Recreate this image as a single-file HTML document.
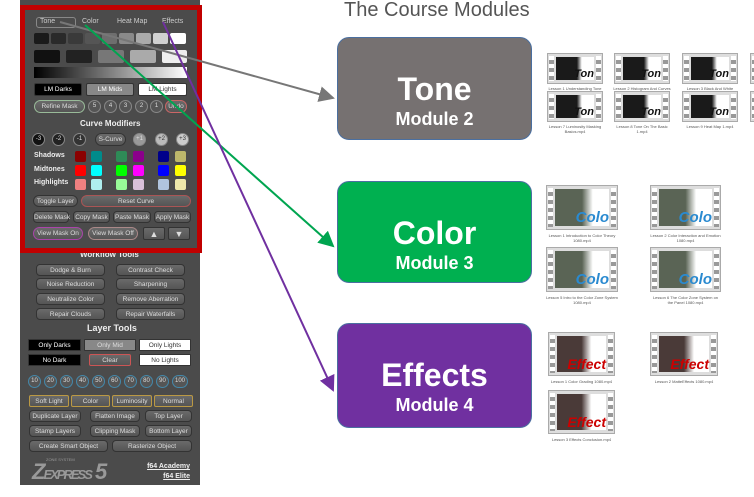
<!DOCTYPE html>
<html><head><meta charset="utf-8"><style>
*{margin:0;padding:0;box-sizing:border-box}
body{width:754px;height:497px;background:#fff;position:relative;overflow:hidden;font-family:"Liberation Sans",sans-serif}
.a{position:absolute}
#panel{left:20px;top:0;width:180px;height:485px;background:#4b4b4b}
#red{left:20px;top:5px;width:182px;height:248px;border:5px solid #c00000}
.b{position:absolute;height:12px;border-radius:4px;background:linear-gradient(#6a6a6a,#555);color:#ddd;font-size:6.5px;text-align:center;line-height:12px;border:1px solid #333;white-space:nowrap}
.c{position:absolute;width:13px;height:13px;border-radius:50%;background:#555;border:1px solid #888;color:#ddd;font-size:6px;text-align:center;line-height:11px}
.s{position:absolute;width:11px;height:11px;border-radius:2px}
.lbl{position:absolute;color:#eee;font-size:7px;font-weight:bold}
.box{position:absolute;left:337px;width:195px;border-radius:12px;border:1px solid #4a6fa0;color:#fff;text-align:center;font-weight:bold}
.box .t{font-size:32px;line-height:38px;margin-top:32px}
.box .m{font-size:18px;line-height:22px}
.th{position:absolute;background:#ddd;border:1px solid #aaa;overflow:hidden}
.th i{position:absolute;top:3px;bottom:3px;left:8px;right:8px}
.th b{position:absolute;right:8px;bottom:3px;font-style:italic;font-weight:bold}
.th:before,.th:after{content:"";position:absolute;top:2px;bottom:2px;width:5px;background:repeating-linear-gradient(#fff 0 4px,#999 4px 8px);z-index:2}
.th:before{left:1px}.th:after{right:1px}
.tn i{background:linear-gradient(90deg,#1a1a1a 55%,#fff 68%)}
.tn b{font-size:11px;color:#111}
.cl i{background:linear-gradient(90deg,#5a6455 50%,#fff 70%)}
.cl b{font-size:15px;color:#2a8ad0}
.ef i{background:linear-gradient(90deg,#4a3a38 50%,#fff 70%)}
.ef b{font-size:14px;color:#c00}
.cap{position:absolute;font-size:4px;color:#555;text-align:center;line-height:5px}
</style></head><body>
<div class="a" id="panel"></div>
<div class="a" id="red"></div>
<div class="a" style="left:36px;top:17px;width:40px;height:11px;border:1px solid #888;border-radius:3px"></div>
<div class="lbl" style="left:40px;top:18px;font-weight:normal;color:#ccc">Tone</div>
<div class="lbl" style="left:82px;top:18px;font-weight:normal;color:#ccc">Color</div>
<div class="lbl" style="left:117px;top:18px;font-weight:normal;color:#ccc">Heat Map</div>
<div class="lbl" style="left:162px;top:18px;font-weight:normal;color:#ccc">Effects</div>
<div class="s" style="left:34px;top:33px;width:15px;background:#1a1a1a"></div>
<div class="s" style="left:51px;top:33px;width:15px;background:#2a2a2a"></div>
<div class="s" style="left:68px;top:33px;width:15px;background:#3a3a3a"></div>
<div class="s" style="left:85px;top:33px;width:15px;background:#555"></div>
<div class="s" style="left:102px;top:33px;width:15px;background:#6e6e6e"></div>
<div class="s" style="left:119px;top:33px;width:15px;background:#8a8a8a"></div>
<div class="s" style="left:136px;top:33px;width:15px;background:#aaa"></div>
<div class="s" style="left:153px;top:33px;width:15px;background:#d0d0d0"></div>
<div class="s" style="left:170px;top:33px;width:16px;background:#fff"></div>
<div class="s" style="left:34px;top:50px;width:26px;height:13px;background:#111"></div>
<div class="s" style="left:66px;top:50px;width:26px;height:13px;background:#222"></div>
<div class="s" style="left:98px;top:50px;width:26px;height:13px;background:#777"></div>
<div class="s" style="left:130px;top:50px;width:26px;height:13px;background:#aaa"></div>
<div class="s" style="left:162px;top:50px;width:25px;height:13px;background:#eee"></div>
<div class="a" style="left:34px;top:67px;width:153px;height:11px;background:linear-gradient(90deg,#000,#fff)"></div>
<div class="b" style="left:34px;top:83px;width:48px;height:13px;background:#000;color:#fff;border-radius:2px">LM Darks</div>
<div class="b" style="left:86px;top:83px;width:48px;height:13px;background:#888;color:#fff;border-radius:2px">LM Mids</div>
<div class="b" style="left:138px;top:83px;width:49px;height:13px;background:#fff;color:#333;border-radius:2px">LM Lights</div>
<div class="b" style="left:34px;top:100px;width:51px;height:13px;border-radius:7px;border-color:#9b9">Refine Mask</div>
<div class="c" style="left:88px;top:100px">5</div><div class="c" style="left:104px;top:100px">4</div><div class="c" style="left:119px;top:100px">3</div><div class="c" style="left:135px;top:100px">2</div><div class="c" style="left:150px;top:100px">1</div>
<div class="b" style="left:165px;top:100px;width:22px;height:13px;border-radius:7px;border-color:#c66">Undo</div>
<div class="lbl" style="left:80px;top:119px;font-size:8px">Curve Modifiers</div>
<div class="c" style="left:32px;top:133px;background:#111">-3</div>
<div class="c" style="left:52px;top:133px;background:#222">-2</div>
<div class="c" style="left:73px;top:133px;background:#333">-1</div>
<div class="b" style="left:95px;top:133px;width:31px;height:13px;border-radius:7px">S-Curve</div>
<div class="c" style="left:133px;top:133px;background:#999">+1</div>
<div class="c" style="left:155px;top:133px;background:#bbb;color:#333">+2</div>
<div class="c" style="left:176px;top:133px;background:#ccc;color:#333">+3</div>
<div class="lbl" style="left:34px;top:152px">Shadows</div>
<div class="lbl" style="left:34px;top:166px">Midtones</div>
<div class="lbl" style="left:34px;top:179px">Highlights</div>
<div class="s" style="left:75px;top:151px;background:#8b0000"></div><div class="s" style="left:91px;top:151px;background:#008b8b"></div><div class="s" style="left:116px;top:151px;background:#2e8b57"></div><div class="s" style="left:133px;top:151px;background:#8b008b"></div><div class="s" style="left:158px;top:151px;background:#00008b"></div><div class="s" style="left:175px;top:151px;background:#bdb76b"></div>
<div class="s" style="left:75px;top:165px;background:#f00"></div><div class="s" style="left:91px;top:165px;background:#0ff"></div><div class="s" style="left:116px;top:165px;background:#0f0"></div><div class="s" style="left:133px;top:165px;background:#f0f"></div><div class="s" style="left:158px;top:165px;background:#00f"></div><div class="s" style="left:175px;top:165px;background:#ff0"></div>
<div class="s" style="left:75px;top:179px;background:#f08080"></div><div class="s" style="left:91px;top:179px;background:#afeeee"></div><div class="s" style="left:116px;top:179px;background:#98fb98"></div><div class="s" style="left:133px;top:179px;background:#d8bfd8"></div><div class="s" style="left:158px;top:179px;background:#b0c4de"></div><div class="s" style="left:175px;top:179px;background:#eee8aa"></div>
<div class="b" style="left:33px;top:195px;width:45px;border-radius:6px">Toggle Layer</div>
<div class="b" style="left:81px;top:195px;width:110px;border-radius:6px;border-color:#a55">Reset Curve</div>
<div class="b" style="left:33px;top:211px;width:36px">Delete Mask</div>
<div class="b" style="left:73px;top:211px;width:37px">Copy Mask</div>
<div class="b" style="left:113px;top:211px;width:38px">Paste Mask</div>
<div class="b" style="left:154px;top:211px;width:37px">Apply Mask</div>
<div class="b" style="left:33px;top:227px;width:50px;height:13px;border-radius:7px;border-color:#a4a">View Mask On</div>
<div class="b" style="left:88px;top:227px;width:50px;height:13px;border-radius:7px;border-color:#a88">View Mask Off</div>
<div class="b" style="left:143px;top:227px;width:22px;height:13px;border-radius:2px;font-size:9px">▲</div>
<div class="b" style="left:168px;top:227px;width:22px;height:13px;border-radius:2px;font-size:9px">▼</div>
<div class="lbl" style="left:80px;top:253px;height:4px;overflow:hidden;font-size:8px;line-height:4px">Workflow Tools</div>
<div class="b" style="left:36px;top:264px;width:69px">Dodge &amp; Burn</div><div class="b" style="left:116px;top:264px;width:69px">Contrast Check</div>
<div class="b" style="left:36px;top:278px;width:69px">Noise Reduction</div><div class="b" style="left:116px;top:278px;width:69px">Sharpening</div>
<div class="b" style="left:36px;top:293px;width:69px">Neutralize Color</div><div class="b" style="left:116px;top:293px;width:69px">Remove Aberration</div>
<div class="b" style="left:36px;top:308px;width:69px">Repair Clouds</div><div class="b" style="left:116px;top:308px;width:69px">Repair Waterfalls</div>
<div class="lbl" style="left:87px;top:323px;font-size:9px">Layer Tools</div>
<div class="b" style="left:28px;top:339px;width:53px;background:#000;color:#fff;border-radius:1px">Only Darks</div>
<div class="b" style="left:84px;top:339px;width:52px;background:#888;border-radius:1px">Only Mid</div>
<div class="b" style="left:139px;top:339px;width:52px;background:#fff;color:#333;border-radius:1px">Only Lights</div>
<div class="b" style="left:28px;top:354px;width:53px;background:#000;color:#fff;border-radius:1px">No Dark</div>
<div class="b" style="left:89px;top:354px;width:42px;border-color:#c55;border-radius:2px">Clear</div>
<div class="b" style="left:139px;top:354px;width:52px;background:#fff;color:#333;border-radius:1px">No Lights</div>
<div class="c" style="left:28px;top:375px;border-color:#48a">10</div><div class="c" style="left:44px;top:375px;border-color:#48a">20</div><div class="c" style="left:60px;top:375px;border-color:#48a">30</div><div class="c" style="left:76px;top:375px;border-color:#48a">40</div><div class="c" style="left:92px;top:375px;border-color:#48a">50</div><div class="c" style="left:108px;top:375px;border-color:#48a">60</div><div class="c" style="left:124px;top:375px;border-color:#48a">70</div><div class="c" style="left:140px;top:375px;border-color:#48a">80</div><div class="c" style="left:156px;top:375px;border-color:#48a">90</div><div class="c" style="left:172px;top:375px;width:16px;border-color:#48a;border-radius:7px">100</div>
<div class="b" style="left:29px;top:395px;width:40px;border-color:#b94;border-radius:2px">Soft Light</div>
<div class="b" style="left:71px;top:395px;width:39px;border-color:#b94;border-radius:2px">Color</div>
<div class="b" style="left:112px;top:395px;width:40px;border-color:#b94;border-radius:2px">Luminosity</div>
<div class="b" style="left:154px;top:395px;width:39px;border-color:#b94;border-radius:2px">Normal</div>
<div class="b" style="left:29px;top:410px;width:52px">Duplicate Layer</div><div class="b" style="left:90px;top:410px;width:50px">Flatten Image</div><div class="b" style="left:145px;top:410px;width:47px">Top Layer</div>
<div class="b" style="left:29px;top:425px;width:52px">Stamp Layers</div><div class="b" style="left:90px;top:425px;width:50px">Clipping Mask</div><div class="b" style="left:145px;top:425px;width:47px">Bottom Layer</div>
<div class="b" style="left:29px;top:440px;width:79px">Create Smart Object</div><div class="b" style="left:112px;top:440px;width:80px">Rasterize Object</div>
<div class="a" style="left:32px;top:459px;color:#999;font-size:22px;font-style:italic;font-weight:bold;letter-spacing:-2px">Z<span style="font-size:13px">EXPRESS</span> 5</div>
<div class="a" style="left:46px;top:457px;color:#999;font-size:4px">ZONE SYSTEM</div>
<div class="a" style="left:147px;top:462px;color:#eee;font-size:7px;font-weight:bold;text-decoration:underline;text-align:right;width:43px;line-height:10px">f64 Academy<br>f64 Elite</div>

<div class="a" style="left:344px;top:-1px;font-size:20px;color:#555">The Course Modules</div>
<div class="box" style="top:37px;height:103px;background:#767171"><div class="t">Tone</div><div class="m">Module 2</div></div>
<div class="box" style="top:181px;height:102px;background:#00b050"><div class="t">Color</div><div class="m">Module 3</div></div>
<div class="box" style="top:323px;height:105px;background:#7030a0"><div class="t">Effects</div><div class="m">Module 4</div></div>

<div class="th tn" style="left:547px;top:53px;width:56px;height:31px"><i></i><b>Ton</b></div>
<div class="th tn" style="left:614px;top:53px;width:56px;height:31px"><i></i><b>Ton</b></div>
<div class="th tn" style="left:682px;top:53px;width:56px;height:31px"><i></i><b>Ton</b></div>
<div class="th tn" style="left:750px;top:53px;width:56px;height:31px"><i></i></div>
<div class="cap" style="left:545px;top:86px;width:60px">Lesson 1 Understanding Tone 1080.mp4</div>
<div class="cap" style="left:612px;top:86px;width:60px">Lesson 2 Histogram And Curves 1080.mp4</div>
<div class="cap" style="left:680px;top:86px;width:60px">Lesson 3 Black And White Conversions 1080.mp4</div>
<div class="th tn" style="left:547px;top:91px;width:56px;height:31px"><i></i><b>Ton</b></div>
<div class="th tn" style="left:614px;top:91px;width:56px;height:31px"><i></i><b>Ton</b></div>
<div class="th tn" style="left:682px;top:91px;width:56px;height:31px"><i></i><b>Ton</b></div>
<div class="th tn" style="left:750px;top:91px;width:56px;height:31px"><i></i></div>
<div class="cap" style="left:545px;top:124px;width:60px">Lesson 7 Luminosity Masking Basics.mp4</div>
<div class="cap" style="left:612px;top:124px;width:60px">Lesson 8 Tone On The Basic 1.mp4</div>
<div class="cap" style="left:680px;top:124px;width:60px">Lesson 9 Heat Map 1.mp4</div>

<div class="th cl" style="left:546px;top:185px;width:72px;height:45px"><i></i><b>Colo</b></div>
<div class="th cl" style="left:650px;top:185px;width:71px;height:45px"><i></i><b>Colo</b></div>
<div class="th cl" style="left:546px;top:247px;width:72px;height:45px"><i></i><b>Colo</b></div>
<div class="th cl" style="left:650px;top:247px;width:71px;height:45px"><i></i><b>Colo</b></div>
<div class="cap" style="left:546px;top:233px;width:72px">Lesson 1 Introduction to Color Theory 1080.mp4</div>
<div class="cap" style="left:650px;top:233px;width:71px">Lesson 2 Color Interaction and Emotion 1080.mp4</div>
<div class="cap" style="left:546px;top:295px;width:72px">Lesson 5 Intro to the Color Zone System 1080.mp4</div>
<div class="cap" style="left:650px;top:295px;width:71px">Lesson 6 The Color Zone System on the Panel 1080.mp4</div>

<div class="th ef" style="left:548px;top:332px;width:67px;height:44px"><i></i><b>Effect</b></div>
<div class="th ef" style="left:650px;top:332px;width:68px;height:44px"><i></i><b>Effect</b></div>
<div class="th ef" style="left:548px;top:390px;width:67px;height:44px"><i></i><b>Effect</b></div>
<div class="cap" style="left:548px;top:379px;width:67px">Lesson 1 Color Grading 1080.mp4</div>
<div class="cap" style="left:650px;top:379px;width:68px">Lesson 2 MatteEffects 1080.mp4</div>
<div class="cap" style="left:548px;top:437px;width:67px">Lesson 3 Effects Conclusion.mp4</div>

<svg class="a" style="left:0;top:0" width="754" height="497">
<defs><marker id="m1" markerWidth="8" markerHeight="8" refX="7" refY="4" orient="auto"><path d="M0,0 L8,4 L0,8z" fill="#777"/></marker>
<marker id="m2" markerWidth="8" markerHeight="8" refX="7" refY="4" orient="auto"><path d="M0,0 L8,4 L0,8z" fill="#00a550"/></marker>
<marker id="m3" markerWidth="8" markerHeight="8" refX="7" refY="4" orient="auto"><path d="M0,0 L8,4 L0,8z" fill="#7030a0"/></marker></defs>
<line x1="60" y1="22" x2="333" y2="98" stroke="#777" stroke-width="2" marker-end="url(#m1)"/>
<line x1="85" y1="25" x2="333" y2="246" stroke="#00a550" stroke-width="2" marker-end="url(#m2)"/>
<line x1="163" y1="22" x2="333" y2="390" stroke="#7030a0" stroke-width="2" marker-end="url(#m3)"/>
</svg>
</body></html>
